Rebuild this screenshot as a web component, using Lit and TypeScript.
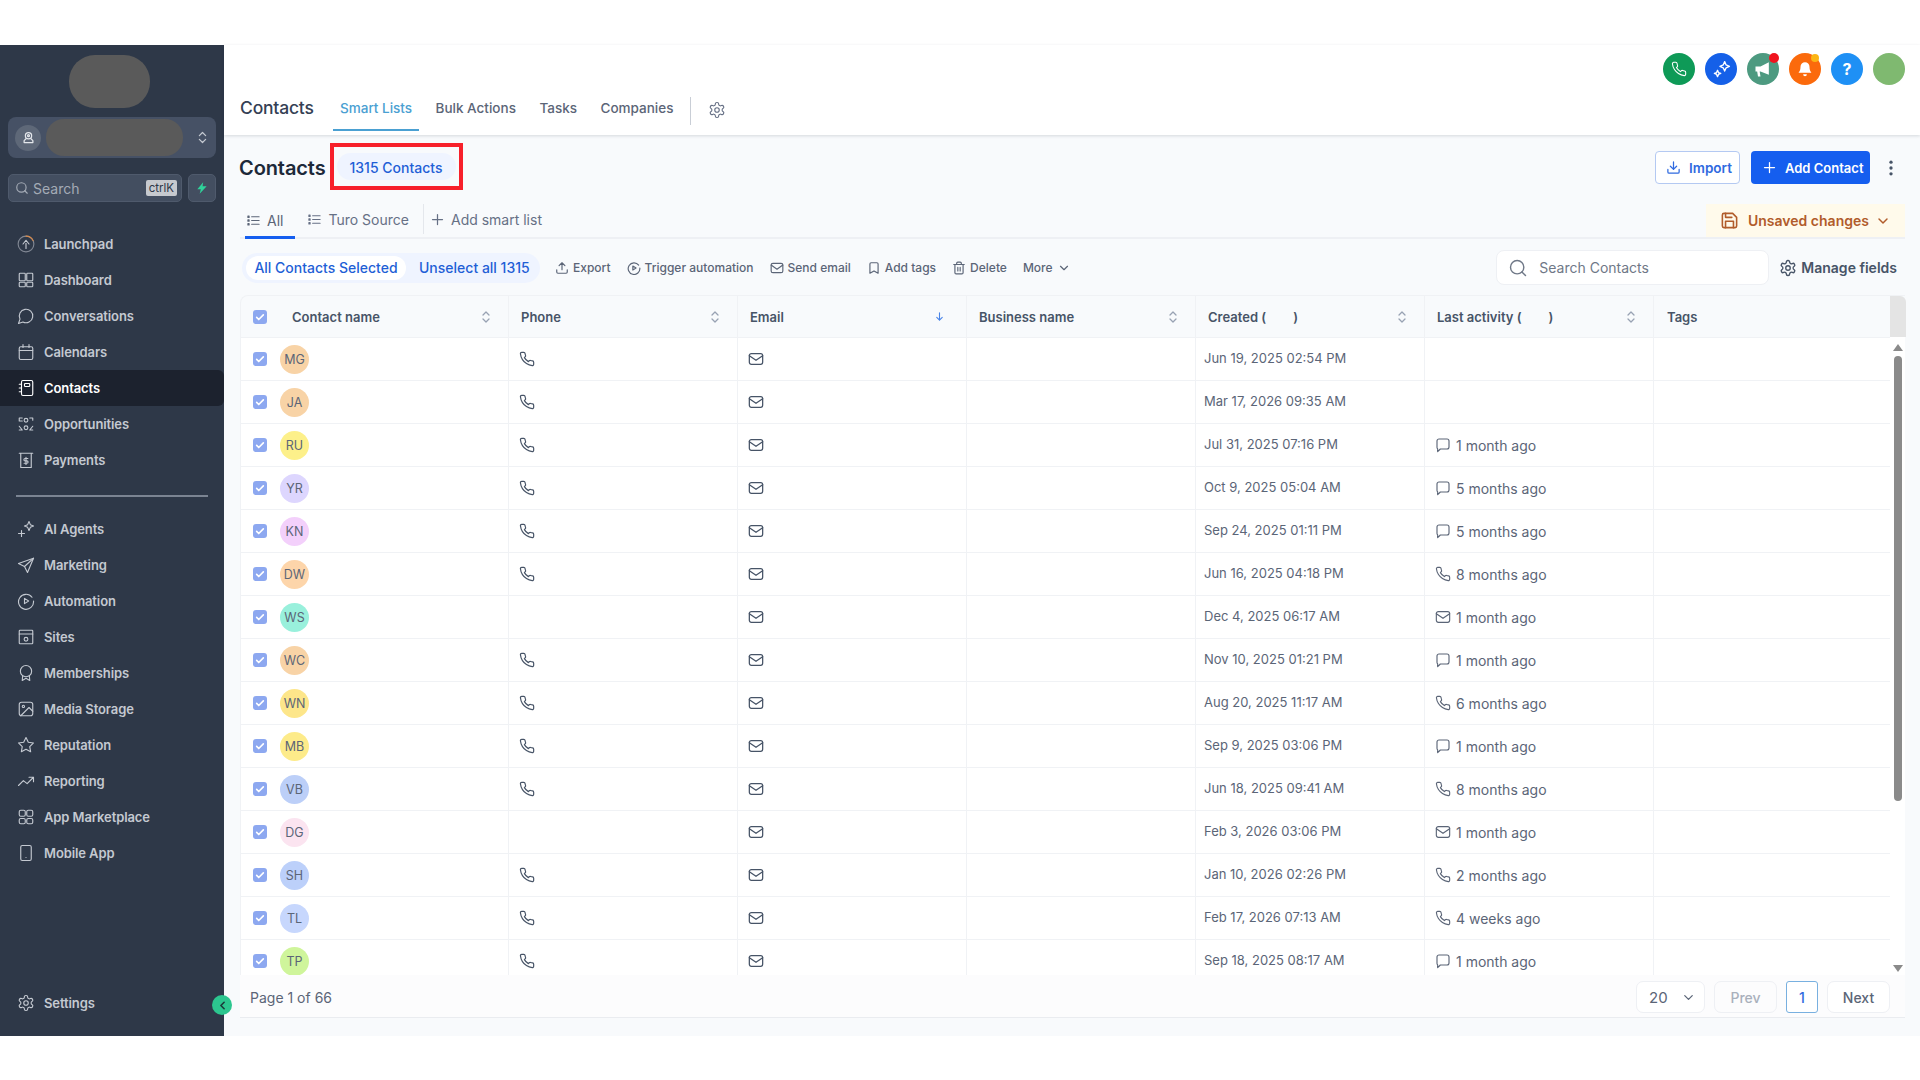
import { LitElement, css, html, svg } from "lit";
import { customElement } from "lit/decorators.js";

const paths: Record<string, any> = {
  phone: svg`<path d="M22 16.92v3a2 2 0 0 1-2.18 2 19.79 19.79 0 0 1-8.63-3.07 19.5 19.5 0 0 1-6-6 19.79 19.79 0 0 1-3.07-8.67A2 2 0 0 1 4.11 2h3a2 2 0 0 1 2 1.72 12.84 12.84 0 0 0 .7 2.81 2 2 0 0 1-.45 2.11L8.09 9.91a16 16 0 0 0 6 6l1.27-1.27a2 2 0 0 1 2.11-.45 12.84 12.84 0 0 0 2.81.7A2 2 0 0 1 22 16.92z"/>`,
  mail: svg`<path d="M5 4h14a3 3 0 0 1 3 3v10a3 3 0 0 1-3 3H5a3 3 0 0 1-3-3V7a3 3 0 0 1 3-3z"/><path d="M22 7l-10 7L2 7"/>`,
  chat: svg`<path d="M21 15a3 3 0 0 1-3 3H8l-4 4v-4.2A3 3 0 0 1 3 15V6a3 3 0 0 1 3-3h12a3 3 0 0 1 3 3z"/>`,
  gear: svg`<path d="M12.22 2h-.44a2 2 0 0 0-2 2v.18a2 2 0 0 1-1 1.73l-.43.25a2 2 0 0 1-2 0l-.15-.08a2 2 0 0 0-2.73.73l-.22.38a2 2 0 0 0 .73 2.73l.15.1a2 2 0 0 1 1 1.72v.51a2 2 0 0 1-1 1.74l-.15.09a2 2 0 0 0-.73 2.73l.22.38a2 2 0 0 0 2.73.73l.15-.08a2 2 0 0 1 2 0l.43.25a2 2 0 0 1 1 1.73V20a2 2 0 0 0 2 2h.44a2 2 0 0 0 2-2v-.18a2 2 0 0 1 1-1.73l.43-.25a2 2 0 0 1 2 0l.15.08a2 2 0 0 0 2.73-.73l.22-.39a2 2 0 0 0-.73-2.73l-.15-.08a2 2 0 0 1-1-1.74v-.5a2 2 0 0 1 1-1.74l.15-.09a2 2 0 0 0 .73-2.73l-.22-.38a2 2 0 0 0-2.73-.73l-.15.08a2 2 0 0 1-2 0l-.43-.25a2 2 0 0 1-1-1.73V4a2 2 0 0 0-2-2z"/><circle cx="12" cy="12" r="3"/>`,
  search: svg`<circle cx="11" cy="11" r="8"/><path d="m21 21-4.3-4.3"/>`,
  list: svg`<path d="M9 6h12M9 12h12M9 18h12"/><path d="M3 5h2v2H3zM3 11h2v2H3zM3 17h2v2H3z"/>`,
  plus: svg`<path d="M12 4v16M4 12h16"/>`,
  chevron: svg`<path d="m6 9 6 6 6-6"/>`,
  download: svg`<path d="M21 15v4a2 2 0 0 1-2 2H5a2 2 0 0 1-2-2v-4M7 10l5 5 5-5M12 15V3"/>`,
  upload: svg`<path d="M21 15v4a2 2 0 0 1-2 2H5a2 2 0 0 1-2-2v-4M17 8l-5-5-5 5M12 3v12"/>`,
  tag: svg`<path d="m19 21-7-4-7 4V5a2 2 0 0 1 2-2h10a2 2 0 0 1 2 2z"/>`,
  trash: svg`<path d="M3 6h18M19 6v14a2 2 0 0 1-2 2H7a2 2 0 0 1-2-2V6M8 6V4a2 2 0 0 1 2-2h4a2 2 0 0 1 2 2v2M10 11v6M14 11v6"/>`,
  save: svg`<path d="M19 21H5a2 2 0 0 1-2-2V5a2 2 0 0 1 2-2h11l5 5v11a2 2 0 0 1-2 2z"/><path d="M17 21v-8H7v8M7 3v5h8"/>`,
  play: svg`<path d="M20 7a10 10 0 1 0 2 5"/><path d="M10 8.5 15.5 12 10 15.5z"/>`,
  launchpad: svg`<circle cx="12" cy="12" r="10.500" stroke-opacity=".55"/><path d="M12 1.500a10.500 10.500 0 0 1 9.500 6" stroke="#d98a4a"/><path d="M12 18v-7M8 12l4-5 4 5"/>`,
  dashboard: svg`<rect x="3" y="3" width="8" height="10" rx="1"/><rect x="13" y="3" width="8" height="10" rx="1"/><rect x="3" y="15" width="8" height="6" rx="1"/><rect x="13" y="15" width="8" height="6" rx="1"/>`,
  conversations: svg`<path d="M7.9 20A9 9 0 1 0 4 16.1L2 22Z"/>`,
  calendars: svg`<rect x="3" y="5" width="18" height="17" rx="2"/><path d="M3 10h18M8 2v4M16 2v4"/>`,
  contacts: svg`<rect x="6" y="2" width="15" height="20" rx="2"/><rect x="10" y="6" width="7" height="4" rx="1"/><path d="M3 7h3M3 12h3M3 17h3"/>`,
  opportunities: svg`<circle cx="12" cy="7" r="2.5"/><circle cx="12" cy="17" r="2.5"/><path d="M3 4h4M3 4v4M3 8h4M21 4h-4M21 4v3M3 15l4 5M3 20h3M21 15l-4 5M21 20h-3"/>`,
  payments: svg`<path d="M3 3h18M5 3v19h14V3"/><path d="M14.5 10h-3.7a1.6 1.6 0 0 0 0 3.2h2.4a1.6 1.6 0 0 1 0 3.2H9.500M12 8.500v9.500"/>`,
  agents: svg`<path d="M16 2l1.800 4.200L22 8l-4.200 1.800L16 14l-1.800-4.200L10 8l4.200-1.800z"/><path d="M6 14v8M2 18h8"/>`,
  marketing: svg`<path d="M22 3 2 10l8 4 4 8z"/><path d="M22 3 10 14"/>`,
  sites: svg`<rect x="3" y="3" width="18" height="18" rx="1"/><path d="M3 8h18"/><circle cx="12" cy="15" r="2.500"/>`,
  memberships: svg`<circle cx="12" cy="9.500" r="7.500"/><path d="M7.500 16 7 22l5-3 5 3-.5-6"/>`,
  media: svg`<rect x="3" y="3" width="18" height="18" rx="3"/><circle cx="8.500" cy="8.500" r="1.500"/><path d="m21 15-5-5L5 21"/>`,
  star: svg`<path d="m12 2 3.090 6.260L22 9.270l-5 4.870 1.180 6.880L12 17.770l-6.180 3.250L7 14.140 2 9.270l6.910-1.010z"/>`,
  reporting: svg`<path d="M22 7 13.500 15.500 8.500 11.500 2 18M16 7h6v6"/>`,
  market: svg`<rect x="3" y="3" width="8" height="8" rx="2"/><rect x="13" y="3" width="8" height="8" rx="2"/><rect x="3" y="14" width="8" height="7" rx="2"/><rect x="13" y="14" width="8" height="7" rx="2"/>`,
  mobile: svg`<rect x="5" y="2" width="14" height="20" rx="2"/><path d="M12 18h.01"/>`,
  userpin: svg`<circle cx="12" cy="9" r="5"/><circle cx="12" cy="9" r="1.500"/><path d="M8 14l-3 3v3h14v-3l-3-3"/>`,
  updown: svg`<path d="m7 9 5-5 5 5M7 15l5 5 5-5"/>`,
  sparkle: svg`<path d="M16 2l1.800 4.200L22 8l-4.200 1.800L16 14l-1.800-4.200L10 8l4.200-1.800z"/><path d="M7 13l1.200 2.800L11 17l-2.800 1.200L7 21l-1.200-2.800L3 17l2.800-1.200z"/>`,
  arrowdown: svg`<path d="M12 4v16M6 14l6 6 6-6"/>`,
  back: svg`<path d="m15 6-6 6 6 6"/>`,
};

function icon(name: string, size = 16, sw = 1.8) {
  return html`<svg class="ic" width=${size} height=${size} viewBox="0 0 24 24" fill="none" stroke="currentColor"
    stroke-width=${sw} stroke-linecap="round" stroke-linejoin="round">${paths[name]}</svg>`;
}

const navTop = [
  ["launchpad", "Launchpad"],
  ["dashboard", "Dashboard"],
  ["conversations", "Conversations"],
  ["calendars", "Calendars"],
  ["contacts", "Contacts"],
  ["opportunities", "Opportunities"],
  ["payments", "Payments"],
];
const navBottom = [
  ["agents", "AI Agents"],
  ["marketing", "Marketing"],
  ["play", "Automation"],
  ["sites", "Sites"],
  ["memberships", "Memberships"],
  ["media", "Media Storage"],
  ["star", "Reputation"],
  ["reporting", "Reporting"],
  ["market", "App Marketplace"],
  ["mobile", "Mobile App"],
];

// initials, avatar colour, has phone, created, activity icon, activity
const rows: [string, string, boolean, string, string, string][] = [
  ["MG", "#f8d3a6", true, "Jun 19, 2025 02:54 PM", "", ""],
  ["JA", "#f8d3a6", true, "Mar 17, 2026 09:35 AM", "", ""],
  ["RU", "#fdf08a", true, "Jul 31, 2025 07:16 PM", "chat", "1 month ago"],
  ["YR", "#ddd6fe", true, "Oct 9, 2025 05:04 AM", "chat", "5 months ago"],
  ["KN", "#f3d0fb", true, "Sep 24, 2025 01:11 PM", "chat", "5 months ago"],
  ["DW", "#fdd5aa", true, "Jun 16, 2025 04:18 PM", "phone", "8 months ago"],
  ["WS", "#99f0dc", false, "Dec 4, 2025 06:17 AM", "mail", "1 month ago"],
  ["WC", "#f8d3a6", true, "Nov 10, 2025 01:21 PM", "chat", "1 month ago"],
  ["WN", "#fde68a", true, "Aug 20, 2025 11:17 AM", "phone", "6 months ago"],
  ["MB", "#fdeb8a", true, "Sep 9, 2025 03:06 PM", "chat", "1 month ago"],
  ["VB", "#bccff8", true, "Jun 18, 2025 09:41 AM", "phone", "8 months ago"],
  ["DG", "#fbe4f0", false, "Feb 3, 2026 03:06 PM", "mail", "1 month ago"],
  ["SH", "#bcd0fa", true, "Jan 10, 2026 02:26 PM", "phone", "2 months ago"],
  ["TL", "#c7d7fd", true, "Feb 17, 2026 07:13 AM", "phone", "4 weeks ago"],
  ["TP", "#cff59b", true, "Sep 18, 2025 08:17 AM", "chat", "1 month ago"],
];

@customElement("app-root")
export class AppRoot extends LitElement {
  static styles = css`
    :host {
      display: block;
      height: 1080px;
      background: #fff;
      padding-top: 45px;
      box-sizing: border-box;
      font-family: Inter, "Liberation Sans", sans-serif;
      color: #475467;
      overflow: hidden;
    }
    .ic { flex: none; display: block; }
    .shell { display: flex; height: 991px; }

    /* sidebar */
    .side {
      width: 224px;
      flex: none;
      background: #2e3848;
      display: flex;
      flex-direction: column;
      padding-bottom: 15px;
      box-sizing: border-box;
      position: relative;
      color: #c4c9d1;
    }
    .logo { width: 81px; height: 53px; border-radius: 26px; background: #5a5a5a; margin: 10px 0 0 69px; }
    .switch {
      height: 41px; margin: 9px 8px 0; border-radius: 8px; background: #465165;
      display: flex; align-items: center; padding: 0 6px 0 7px; box-sizing: border-box;
    }
    .pin { width: 26px; height: 26px; border-radius: 50%; background: #5e6878; display: grid; place-items: center; color: #e4e7eb; }
    .blob { width: 137px; height: 37px; border-radius: 18px; background: #5a5a5a; margin: 0 0 0 5px; }
    .switch .ud { margin-left: auto; color: #c4c9d1; }
    .sbar { display: flex; gap: 6px; margin: 16px 8px 0; height: 28px; }
    .sinput {
      flex: 1; border-radius: 5px; background: #434e60; border: 1px solid #4f5a6c; box-sizing: border-box;
      display: flex; align-items: center; padding: 0 4px 0 6px; gap: 4px; color: #a4abb6; font-size: 14px;
    }
    .kbd { margin-left: auto; background: #c6c9ce; color: #2e3848; font-size: 11.5px; height: 16px; line-height: 16px; padding: 0 3px; border-radius: 2px; }
    .bolt { width: 28px; border-radius: 5px; background: #434e60; border: 1px solid #4f5a6c; box-sizing: border-box; display: grid; place-items: center; }
    .nav { display: flex; flex-direction: column; }
    .nav.one { margin-top: 24px; }
    .nav.two { margin-top: 13.5px; }
    .item {
      height: 36px; display: flex; align-items: center; padding-left: 17px; gap: 9px;
      font-size: 13px; font-weight: 600; letter-spacing: -0.1px; border-radius: 0 6px 6px 0;
    }
    .item.on { background: #1c222e; color: #fff; }
    .rule { height: 2px; background: #7b8492; margin: 17px 16px 0; }
    .settings { margin-top: auto; }
    .collapse {
      position: absolute; right: -8px; bottom: 21px; width: 20px; height: 20px; border-radius: 50%;
      background: #2cc68f; color: #1c3a3a; display: grid; place-items: center;
    }

    /* main */
    .main { flex: 1; min-width: 0; background: #f8fafc; display: flex; flex-direction: column; }
    .head { background: #fff; height: 90px; box-shadow: 0 1px 3px rgba(16, 24, 40, .15); flex: none; display: flex; flex-direction: column; position: relative; }
    .tools { display: flex; justify-content: flex-end; gap: 10px; padding: 8px 15px 0 0; height: 32px; }
    .tool { width: 32px; height: 32px; border-radius: 50%; display: grid; place-items: center; color: #fff; position: relative; font-weight: 700; font-size: 16px; }
    .t1 { background: #0e9a57; } .t2 { background: #1560e8; } .t3 { background: #4d9a80; }
    .t4 { background: #fb6a0c; } .t5 { background: #1e90f5; } .t6 { background: #7fb970; }
    .dot { position: absolute; border-radius: 50%; }
    .d1 { width: 10px; height: 10px; background: #f0141e; top: 0; right: 0; }
    .d2 { width: 8px; height: 8px; background: #fbb514; top: 1px; right: 2px; }
    .crumbs { display: flex; align-items: flex-start; height: 50px; padding-left: 16px; }
    .crumbs h2 { margin: 12px 0 0 0; width: 93px; flex: none; font-size: 17.5px; line-height: 22px; font-weight: 500; color: #344054; letter-spacing: -0.2px; white-space: nowrap; }
    .ntab { height: 46px; padding: 14px 7px 0; box-sizing: border-box; font-size: 13.5px; line-height: 18px; font-weight: 500; color: #5b6577; margin-right: 9.5px; white-space: nowrap; }
    .ntab.on { color: #4aa0d2; border-bottom: 2px solid #4aa0d2; }
    .vline { width: 1px; height: 28px; background: #c9ced6; margin: 12px 0 0 0; }
    .cog { margin: 16px 0 0 17px; color: #667085; }

    .page { flex: 1; padding: 8px 15px 18px 16px; display: flex; flex-direction: column; min-height: 0; }
    .titlerow { display: flex; align-items: center; height: 47px; }
    .titlerow .right { margin-left: auto; display: flex; align-items: center; gap: 11px; padding-top: 2px; }
    h1 { margin: 2px 4px 0 -1px; font-size: 20px; font-weight: 600; color: #1d2939; letter-spacing: -0.1px; }
    .redbox { border: 4px solid #f7202a; height: 47px; box-sizing: border-box; display: flex; align-items: center; padding: 0 3px; }
    .chip { height: 27px; line-height: 29px; padding: 0 13px; border-radius: 14px; background: #eff4ff; color: #1f5fd6; font-size: 14px; font-weight: 500; white-space: nowrap; }
    .btn { height: 33px; border-radius: 4px; display: flex; align-items: center; box-sizing: border-box; font-size: 13.5px; font-weight: 600; white-space: nowrap; }
    .btn.ghost { width: 85px; background: #fff; border: 1.5px solid #b4c9f2; color: #2f6ae0; padding-left: 10px; gap: 8px; }
    .btn.solid { width: 119px; background: #155eef; color: #fff; padding-left: 11px; gap: 8px; font-size: 13px; }
    .kebab { margin-right: 4px; color: #475467; }

    .tabs { display: flex; align-items: flex-start; height: 33px; margin-top: 14px; border-bottom: 2px solid #eef0f4; position: relative; font-size: 14px; }
    .tab { display: flex; align-items: center; height: 33px; box-sizing: border-box; padding: 1px 6px 0; gap: 6px; color: #667085; margin-right: 8px; border-bottom: 3px solid transparent; white-space: nowrap; }
    .tab.on { border-bottom-color: #155eef; color: #5b6577; margin: 0 6px -2px 5px; padding: 1px 12px 0 1px; height: 35px; }
    .tabs .vl { width: 1px; height: 30px; background: #e4e7ec; margin: 0 6px 0 0; }
    .tabs .add { padding-left: 0; }
    .unsaved { margin-left: auto; width: 199px; height: 33px; display: flex; align-items: center; background: #fffaeb; color: #b15c2b; padding-left: 14px; box-sizing: border-box; gap: 9px; font-weight: 600; font-size: 14px; }
    .unsaved .ic:last-child { margin-left: -3px; }

    .actions { display: flex; align-items: center; height: 35px; margin-top: 11px; font-size: 12px; color: #5b6577; }
    .selpill { height: 30px; background: #eff4ff; border-radius: 15px; display: flex; align-items: center; margin-left: 2px; width: 298px; padding-left: 4px; box-sizing: border-box; color: #1f5fd6; font-size: 14px; font-weight: 500; margin-right: 15px; white-space: nowrap; }
    .selpill b { font-weight: 500; background: #fff; height: 24px; line-height: 24px; width: 160px; text-align: center; border-radius: 12px; margin-right: 13px; }
    .act { display: flex; align-items: center; gap: 4px; margin-right: 16px; white-space: nowrap; font-weight: 500; }
    .srch { margin-left: auto; width: 273px; height: 35px; background: #fff; border: 1px solid #eef0f4; border-radius: 8px; box-sizing: border-box; display: flex; align-items: center; padding-left: 11px; gap: 11px; font-size: 14px; color: #6f7887; }
    .mf { display: flex; align-items: center; gap: 4px; margin-left: 10px; margin-right: 8px; font-size: 14px; font-weight: 600; color: #475467; }

    .table { margin-top: 10px; flex: 1; min-height: 0; display: flex; flex-direction: column; }
    .thead { display: flex; height: 41px; border: 1px solid #f0f2f5; border-width: 1px 0 0 1px; border-radius: 8px 0 0 0; background: #f8fafc; flex: none; }
    .cols { display: grid; grid-template-columns: 268px repeat(5, 229px) 236px; width: 1649px; flex: none; }
    .gut { width: 16px; flex: none; background: #e4e4e4; border-radius: 0 6px 0 0; }
    .th { display: flex; align-items: center; justify-content: space-between; padding: 0 17px 0 12px; box-sizing: border-box; border-right: 1px solid #f0f2f5; font-size: 13px; font-weight: 600; color: #475467; }
    .th:last-child { border-right: 0; padding-left: 13px; }
    .th.first { padding-left: 12px; justify-content: flex-start; gap: 25px; }
    .th.first .sort { margin-left: auto; }
    .gap { display: inline-block; width: 27px; }
    .sort { color: #98a2b3; }
    .sort.act-sort { color: #4a85e8; margin-right: 4px; }
    .cb { width: 14px; height: 14px; border-radius: 3px; background: #8da8f0; color: #fff; display: grid; place-items: center; flex: none; }
    .bodywrap { flex: 1; min-height: 0; display: flex; background: #fff; border-left: 1px solid #f0f2f5; }
    .body { width: 1649px; flex: none; overflow: hidden; }
    .tr { height: 43px; box-sizing: border-box; border-top: 1px solid #f0f2f5; }
    .td { display: flex; align-items: center; box-sizing: border-box; border-right: 1px solid #f0f2f5; color: #5b6577; font-size: 13px; padding-left: 8px; }
    .td:last-child { border-right: 0; }
    .td.first { padding-left: 12px; gap: 13px; }
    .td.tight { padding-left: 10px; color: #475467; }
    .td.activity { padding-left: 10px; gap: 5px; font-size: 14px; }
    .td .date { position: relative; top: -1px; }
    .av { width: 29px; height: 29px; border-radius: 50%; display: grid; place-items: center; font-size: 12.5px; color: #5b6577; flex: none; }
    .bar { width: 16px; flex: none; display: flex; flex-direction: column; align-items: center; padding-top: 7px; box-sizing: border-box; }
    .tri { width: 0; height: 0; border-left: 5px solid transparent; border-right: 5px solid transparent; }
    .tri.up { border-bottom: 7px solid #8a8a8a; }
    .tri.down { border-top: 7px solid #8a8a8a; margin-top: auto; margin-bottom: 3px; }
    .thumb { width: 8px; height: 445px; border-radius: 4px; background: #8a8a8a; margin-top: 5px; }
    .foot { height: 42px; flex: none; background: #fcfcfd; border-bottom: 1px solid #eaecf0; display: flex; align-items: center; padding: 0 15px 0 10px; font-size: 14px; color: #5b6577; }
    .foot > span { padding-top: 2px; }
    .foot .pg { margin-left: auto; display: flex; gap: 9px; align-items: center; padding-top: 2px; }
    .pb { height: 32px; box-sizing: border-box; border: 1px solid #eef0f4; border-radius: 7px; background: #fff; display: flex; align-items: center; justify-content: center; font-size: 14px; font-weight: 500; color: #5b6577; }
    .pb.size { width: 69px; gap: 13px; font-size: 15px; font-weight: 400; justify-content: flex-start; padding-left: 12px; }
    .pb.prev { width: 63px; color: #a9b0bc; background: #fcfcfd; }
    .pb.num { width: 32px; border: 1.5px solid #78b0e0; border-radius: 3px; color: #2f6ae0; }
    .pb.next { width: 63px; }
  `;

  private check() {
    return html`<span class="cb"><svg width="10" height="10" viewBox="0 0 24 24" fill="none" stroke="currentColor" stroke-width="4" stroke-linecap="round" stroke-linejoin="round"><path d="m4 13 5 5L20 7"/></svg></span>`;
  }

  private sort(active = false) {
    if (active) return html`<span class="sort act-sort">${icon("arrowdown", 11, 2.4)}</span>`;
    return html`<span class="sort"><svg class="ic" width="10" height="14" viewBox="0 0 10 14" fill="none" stroke="currentColor" stroke-width="1.300" stroke-linecap="round" stroke-linejoin="round"><path d="M2 5l3-3 3 3M2 9l3 3 3-3"/></svg></span>`;
  }

  private sidebar() {
    const item = ([ic, label]: string[]) =>
      html`<div class="item ${label === "Contacts" ? "on" : ""}">${icon(ic, 18, 1.5)}<span>${label}</span></div>`;
    return html`<aside class="side">
      <div class="logo"></div>
      <div class="switch">
        <span class="pin">${icon("userpin", 15, 2)}</span>
        <span class="blob"></span>
        <span class="ud">${icon("updown", 15, 2)}</span>
      </div>
      <div class="sbar">
        <div class="sinput">${icon("search", 14, 2)}<span>Search</span><span class="kbd">ctrlK</span></div>
        <div class="bolt"><svg width="14" height="14" viewBox="0 0 24 24" fill="#2fd29a"><path d="M14 2 4 14h6l-2 8 12-13h-7z"/></svg></div>
      </div>
      <nav class="nav one">${navTop.map(item)}</nav>
      <div class="rule"></div>
      <nav class="nav two">${navBottom.map(item)}</nav>
      <div class="item settings">${icon("gear", 18, 1.5)}<span>Settings</span></div>
      <div class="collapse">${icon("back", 13, 3)}</div>
    </aside>`;
  }

  private header() {
    return html`<header class="head">
      <div class="tools">
        <span class="tool t1">${icon("phone", 16, 1.6)}</span>
        <span class="tool t2">${icon("sparkle", 19, 1.7)}</span>
        <span class="tool t3">
          <svg width="20" height="20" viewBox="0 0 24 24" fill="#fff"><path d="M3 9h6l10-5v15L9 15H8l1 6H6l-1-6H3z"/></svg>
          <i class="dot d1"></i>
        </span>
        <span class="tool t4">
          <svg width="18" height="18" viewBox="0 0 24 24" fill="#fff"><path d="M12 3a6 6 0 0 0-6 6c0 6-2.500 7.500-2.500 8h17c0-.5-2.500-2-2.500-8a6 6 0 0 0-6-6zM9.500 19a2.500 2.500 0 0 0 5 0z"/></svg>
          <i class="dot d2"></i>
        </span>
        <span class="tool t5">?</span>
        <span class="tool t6"></span>
      </div>
      <div class="crumbs">
        <h2>Contacts</h2>
        <span class="ntab on">Smart Lists</span>
        <span class="ntab">Bulk Actions</span>
        <span class="ntab">Tasks</span>
        <span class="ntab">Companies</span>
        <span class="vline"></span>
        <span class="cog">${icon("gear", 18, 1.5)}</span>
      </div>
    </header>`;
  }

  private table() {
    return html`<section class="table">
      <div class="thead">
        <div class="cols">
          <div class="th first">${this.check()}<span>Contact name</span>${this.sort()}</div>
          <div class="th"><span>Phone</span>${this.sort()}</div>
          <div class="th"><span>Email</span>${this.sort(true)}</div>
          <div class="th"><span>Business name</span>${this.sort()}</div>
          <div class="th"><span>Created (<i class="gap"></i>)</span>${this.sort()}</div>
          <div class="th"><span>Last activity (<i class="gap"></i>)</span>${this.sort()}</div>
          <div class="th"><span>Tags</span></div>
        </div>
        <div class="gut"></div>
      </div>
      <div class="bodywrap">
        <div class="body">
          ${rows.map(
            ([ini, col, hasPhone, created, actIc, act]) => html`<div class="cols tr">
              <div class="td first">${this.check()}<span class="av" style="background:${col}">${ini}</span></div>
              <div class="td tight">${hasPhone ? icon("phone", 16, 1.8) : ""}</div>
              <div class="td tight">${icon("mail", 16, 1.9)}</div>
              <div class="td"></div>
              <div class="td"><span class="date">${created}</span></div>
              <div class="td activity">${actIc ? icon(actIc, 16, 1.7) : ""}<span>${act}</span></div>
              <div class="td"></div>
            </div>`
          )}
        </div>
        <div class="bar">
          <i class="tri up"></i>
          <i class="thumb"></i>
          <i class="tri down"></i>
        </div>
      </div>
      <div class="foot">
        <span>Page 1 of 66</span>
        <div class="pg">
          <span class="pb size">20 ${icon("chevron", 15, 2)}</span>
          <span class="pb prev">Prev</span>
          <span class="pb num">1</span>
          <span class="pb next">Next</span>
        </div>
      </div>
    </section>`;
  }

  render() {
    return html`<div class="shell">
      ${this.sidebar()}
      <div class="main">
        ${this.header()}
        <div class="page">
          <div class="titlerow">
            <h1>Contacts</h1>
            <div class="redbox"><span class="chip">1315 Contacts</span></div>
            <div class="right">
              <div class="btn ghost">${icon("download", 15, 2)}<span>Import</span></div>
              <div class="btn solid">${icon("plus", 15, 2)}<span>Add Contact</span></div>
              <span class="kebab"><svg class="ic" width="20" height="20" viewBox="0 0 24 24" fill="currentColor"><circle cx="12" cy="5" r="2"/><circle cx="12" cy="12" r="2"/><circle cx="12" cy="19" r="2"/></svg></span>
            </div>
          </div>
          <div class="tabs">
            <div class="tab on">${icon("list", 15, 1.7)}<span>All</span></div>
            <div class="tab">${icon("list", 15, 1.7)}<span>Turo Source</span></div>
            <span class="vl"></span>
            <div class="tab add">${icon("plus", 15, 2)}<span>Add smart list</span></div>
            <div class="unsaved">${icon("save", 19, 2)}<span>Unsaved changes</span>${icon("chevron", 16, 2.2)}</div>
          </div>
          <div class="actions">
            <div class="selpill"><b>All Contacts Selected</b><span>Unselect all 1315</span></div>
            <div class="act">${icon("upload", 14, 2)}<span>Export</span></div>
            <div class="act">${icon("play", 14, 2)}<span>Trigger automation</span></div>
            <div class="act">${icon("mail", 14, 2)}<span>Send email</span></div>
            <div class="act">${icon("tag", 14, 2)}<span>Add tags</span></div>
            <div class="act">${icon("trash", 14, 2)}<span>Delete</span></div>
            <div class="act">More ${icon("chevron", 14, 2)}</div>
            <div class="srch">${icon("search", 20, 1.7)}<span>Search Contacts</span></div>
            <div class="mf">${icon("gear", 18, 1.8)}<span>Manage fields</span></div>
          </div>
          ${this.table()}
        </div>
      </div>
    </div>`;
  }
}
